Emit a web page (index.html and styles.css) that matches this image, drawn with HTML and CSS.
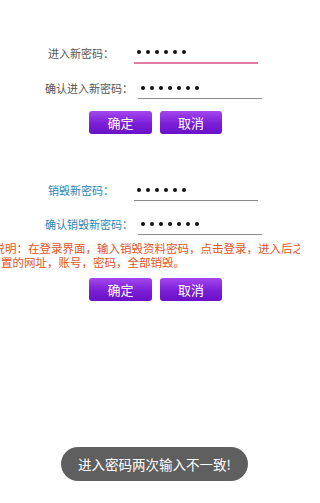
FILE: index.html
```html
<!DOCTYPE html>
<html lang="zh-CN">
<head>
<meta charset="utf-8">
<link rel="stylesheet" href="styles.css">
</head>
<body>
<div class="page">
  <section class="group first">
    <div class="row">
      <span class="label">进入新密码：</span>
      <span class="field focus gap-wide">
        <i></i><i></i><i></i><i></i><i></i><i></i>
      </span>
    </div>
    <div class="row wide">
      <span class="label">确认进入新密码：</span>
      <span class="field gap-narrow">
        <i></i><i></i><i></i><i></i><i></i><i></i><i></i>
      </span>
    </div>
    <div class="buttons">
      <button class="btn">确定</button>
      <button class="btn">取消</button>
    </div>
  </section>

  <section class="group second">
    <div class="row">
      <span class="label blue">销毁新密码：</span>
      <span class="field gap-wide">
        <i></i><i></i><i></i><i></i><i></i><i></i>
      </span>
    </div>
    <div class="row wide">
      <span class="label blue">确认销毁新密码：</span>
      <span class="field gap-narrow">
        <i></i><i></i><i></i><i></i><i></i><i></i><i></i>
      </span>
    </div>
    <div class="note">
      <span class="line one">说明：在登录界面，输入销毁资料密码，点击登录，进入后之前设</span>
      <span class="line two">置的网址，账号，密码，全部销毁。</span>
    </div>
    <div class="buttons">
      <button class="btn">确定</button>
      <button class="btn">取消</button>
    </div>
  </section>
</div>
<div class="toast">进入密码两次输入不一致!</div>
</body>
</html>
```

FILE: styles.css
```css
html, body {
  margin: 0;
  padding: 0;
  background: #ffffff;
}
body {
  width: 300px;
  height: 503px;
  overflow: hidden;
  position: relative;
  font-family: "Noto Sans CJK SC", "Noto Sans", sans-serif;
}
.page {
  display: flex;
  flex-direction: column;
  padding-top: 41px;
}
.group {
  display: flex;
  flex-direction: column;
}
.second {
  margin-top: 44px;
}
.row {
  display: flex;
  align-items: center;
  height: 23px;
  padding-left: 48px;
}
.row + .row {
  margin-top: 12px;
}
.second .row + .row {
  margin-top: 11px;
}
.row.wide {
  padding-left: 45px;
}
.label {
  font-size: 11px;
  line-height: 14px;
  color: #555555;
  white-space: nowrap;
}
.label.blue {
  color: #2b86b6;
}
.field {
  box-sizing: border-box;
  width: 124px;
  height: 23px;
  display: flex;
  align-items: center;
  gap: 5px;
  padding-left: 3px;
  padding-top: 1px;
  border-bottom: 1px solid #8a8a8a;
}
.field.focus {
  border-bottom: 2px solid #e07ba3;
  padding-top: 1px;
}
.gap-wide {
  margin-left: 20px;
}
.gap-narrow {
  margin-left: 5px;
}
.field i {
  display: block;
  flex: none;
  width: 4px;
  height: 4px;
  border-radius: 50%;
  background: #111111;
}
.buttons {
  display: flex;
  gap: 8px;
  padding-left: 89px;
  margin-top: 12px;
}
.btn {
  width: 63px;
  height: 23px;
  padding: 0;
  border: none;
  border-radius: 3px;
  background: linear-gradient(#a447ee, #7a1fd6 55%, #6a10c6);
  color: #ffffff;
  font-family: "Noto Sans CJK SC", sans-serif;
  font-size: 13px;
  line-height: 23px;
}
.btn + .btn {
  width: 62px;
}
.note {
  display: flex;
  flex-direction: column;
  margin-top: 6px;
  font-size: 11.5px;
  line-height: 14px;
  color: #e4531c;
  white-space: nowrap;
}
.line.one {
  margin-left: -6.5px;
}
.line.two {
  margin-left: 1px;
}
.second .buttons {
  margin-top: 9px;
}
.toast {
  position: absolute;
  left: 61px;
  top: 447px;
  width: 187px;
  height: 34px;
  border-radius: 17px;
  background: #5f5f5f;
  color: #ffffff;
  font-size: 13.5px;
  display: flex;
  align-items: center;
  justify-content: center;
}
```
